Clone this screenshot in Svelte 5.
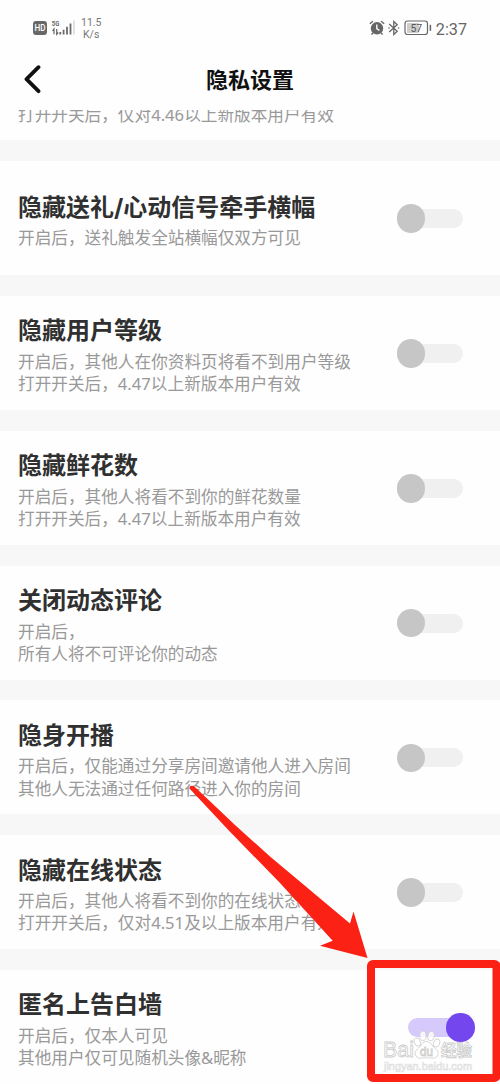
<script>
  const items = [
    { title: '隐藏送礼/心动信号牵手横幅', lines: ['开启后，送礼触发全站横幅仅双方可见'], on: false },
    { title: '隐藏用户等级', lines: ['开启后，其他人在你资料页将看不到用户等级', '打开开关后，4.47以上新版本用户有效'], on: false },
    { title: '隐藏鲜花数', lines: ['开启后，其他人将看不到你的鲜花数量', '打开开关后，4.47以上新版本用户有效'], on: false },
    { title: '关闭动态评论', lines: ['开启后，', '所有人将不可评论你的动态'], on: false },
    { title: '隐身开播', lines: ['开启后，仅能通过分享房间邀请他人进入房间', '其他人无法通过任何路径进入你的房间'], on: false },
    { title: '隐藏在线状态', lines: ['开启后，其他人将看不到你的在线状态', '打开开关后，仅对4.51及以上版本用户有效'], on: false },
    { title: '匿名上告白墙', lines: ['开启后，仅本人可见', '其他用户仅可见随机头像&昵称'], on: true }
  ];
</script>

<div class="screen">
  <div class="status">
    <div class="left">
      <svg width="44" height="18" viewBox="0 0 44 18">
        <rect x="1" y="2" width="14" height="14" rx="3" fill="#686868" />
        <text x="2.5" y="12.4" font-size="9" font-weight="500" fill="#fff" textLength="11" lengthAdjust="spacingAndGlyphs">HD</text>
        <text x="19.8" y="7.2" font-size="8" font-weight="700" fill="#666" textLength="7.5" lengthAdjust="spacingAndGlyphs">5G</text>
        <path d="M22 15.3V10l-1.5 1.8M24.7 10V15.3l1.5-1.8" fill="none" stroke="#666" stroke-width="1.2" />
        <path d="M28.3 13V15.5M31.6 10.8V15.5M35 7.8V15.5M38.5 4.5V15.5" stroke="#6a6a6a" stroke-width="1.8" />
        <path d="M42 1.5V15.5" stroke="#e1e1e1" stroke-width="2" />
      </svg>
      <div class="speed"><span>11.5</span><span>K/s</span></div>
    </div>
    <div class="right">
      <svg width="16" height="16" viewBox="0 0 16 16">
        <circle cx="8" cy="8.3" r="6.2" fill="#666" />
        <path d="M.8 3.8 4 1.2M15.2 3.8 12 1.2M4 13l-1.6 1.6M12 13l1.6 1.6" stroke="#666" stroke-width="1.4" />
        <path d="M7.8 4.6v4l2.6 1.9" fill="none" stroke="#fff" stroke-width="1.4" />
      </svg>
      <svg class="bt" width="12" height="16" viewBox="0 0 12 16">
        <path d="M1.2 4 9.2 11.2 5.8 14.5V1.5L9.2 4.7 1.2 12" fill="none" stroke="#666" stroke-width="1.3" />
        <circle cx="1" cy="8" r=".8" fill="#666" /><circle cx="10.6" cy="8" r=".8" fill="#666" />
      </svg>
      <svg class="battery" width="28" height="16" viewBox="0 0 28 16">
        <rect x="3" y="3" width="12" height="10" rx="1" fill="#cecece" />
        <rect x="1" y="1" width="22.5" height="13.5" rx="2.5" fill="none" stroke="#666" stroke-width="1.2" />
        <path d="M26.4 4.8v6" stroke="#666" stroke-width="1.5" />
        <text x="12.3" y="11.7" text-anchor="middle" font-size="10.5" fill="#555">57</text>
      </svg>
      <span class="time">2:37</span>
    </div>
  </div>

  <header>
    <svg width="20" height="30" viewBox="0 0 20 30">
      <path d="M16.5 2.2 4.5 14.2 16.5 26.2" fill="none" stroke="#111" stroke-width="3.8" stroke-linecap="round" stroke-linejoin="round" />
    </svg>
    <h1>隐私设置</h1>
  </header>

  <main>
    <section class="scrolled"><p>打开开关后，仅对4.46以上新版本用户有效</p></section>
    {#each items as item}
      <section class="card">
        <div class="copy">
          <h2>{item.title}</h2>
          {#each item.lines as line}<p>{line}</p>{/each}
        </div>
        <div class="switch" class:on={item.on}><i></i></div>
      </section>
    {/each}
  </main>

  <svg class="overlay" width="500" height="1084" viewBox="0 0 500 1084">
    <g class="mark">
      <text x="383" y="1057" font-size="22" textLength="31" lengthAdjust="spacingAndGlyphs">Bai</text>
      <ellipse cx="417.3" cy="1042" rx="3" ry="4.2" transform="rotate(-20 417.3 1042)" />
      <ellipse cx="423" cy="1035.8" rx="3.2" ry="4.7" />
      <ellipse cx="431" cy="1036" rx="3.2" ry="4.7" transform="rotate(10 431 1036)" />
      <ellipse cx="436.6" cy="1043" rx="3" ry="4.2" transform="rotate(22 436.6 1043)" />
      <path d="M426.5 1041.5c-4 0-5.2 4-8 6.5-3 2.7-4.2 5-2.5 8 2 3.3 6 1.8 10.5 1.8s8.5 1.5 10.8-1.8c2-3 .3-5.5-2.6-8-3-2.5-4.2-6.5-8.2-6.5z" />
      <text class="du" x="420" y="1056" font-size="12" textLength="13" lengthAdjust="spacingAndGlyphs">du</text>
      <text class="cn" x="441" y="1056" font-size="15.5" textLength="31">经验</text>
      <text class="url" x="384" y="1069.5" font-size="10.5" textLength="88" lengthAdjust="spacingAndGlyphs">jingyan.baidu.com</text>
    </g>
    <path d="M189.5 788.5Q189 785.5 192 785.8 194 785.8 196 788L235 825 270 856.5 350 923.5 353.5 911.5 367.5 958 320 945.7 332.7 940.7 280 883 230 831.7Z" fill="#fb2114" />
    <rect x="371" y="964" width="125.5" height="114" rx="2" fill="none" stroke="#fb2114" stroke-width="8" />
  </svg>
</div>

<style>
  :global(body) { margin: 0; background: #fff; }
  .screen {
    position: relative;
    display: flex;
    flex-direction: column;
    width: 500px;
    height: 1084px;
    overflow: hidden;
    background: #fefefe;
    font-family: Roboto, "Noto Sans CJK SC", sans-serif;
  }
  .status {
    display: flex;
    flex: none;
    justify-content: space-between;
    height: 55px;
    box-sizing: border-box;
    padding: 15px 33px 0 32px;
    color: #666;
  }
  .left, .right { display: flex; align-items: flex-start; }
  .left svg { margin-top: 4px; }
  .speed { display: flex; flex-direction: column; margin: 1.5px 0 0 5px; font-size: 10.5px; line-height: 12.6px; color: #777; }
  .speed span:last-child { padding-left: 2px; }
  .right svg { margin-top: 5px; }
  .bt { margin-left: 3px; }
  .battery { margin-left: 4px; }
  .time { margin-left: 4px; font-size: 16.2px; line-height: 29px; }
  header {
    display: grid;
    grid-template-columns: 62px 1fr 62px;
    align-items: center;
    flex: none;
    height: 55px;
    box-sizing: border-box;
    padding-bottom: 9px;
  }
  header svg { margin: 3px 0 0 22px; }
  h1 { margin: 0; font: 700 22px/30px "Noto Sans CJK SC", sans-serif; text-align: center; color: #111; }
  main { display: flex; flex: none; flex-direction: column; gap: 20.8px; height: 974px; overflow: hidden; background: #f7f7f7; }
  section { flex: none; background: #fefefe; box-sizing: border-box; padding: 0 36px 0 18px; }
  .scrolled { display: flex; align-items: flex-end; height: 30.4px; padding-bottom: 14.5px; overflow: hidden; }
  .card { display: flex; align-items: center; justify-content: space-between; height: 114px; }
  h2 { margin: 0; padding: 1px 0 .5px; font: 700 24px/39px Inter, "Noto Sans CJK SC", sans-serif; color: #303030; white-space: nowrap; }
  p { margin: 0; font: 400 16.65px/22.3px "Noto Sans", "Noto Sans CJK SC", sans-serif; color: #999; white-space: nowrap; }
  .switch { position: relative; display: flex; align-items: center; flex: none; width: 67px; height: 29px; margin-top: 1px; }
  .switch::before { content: ""; width: 57px; height: 19px; margin-left: 9px; border-radius: 10px; background: #f0f0f0; }
  .switch i { position: absolute; left: -.5px; width: 28.5px; height: 28.5px; border-radius: 50%; background: #c6c6c6; }
  .switch.on { margin-right: -11px; }
  .switch.on::before { margin-left: 0; background: #d6c9fb; }
  .switch.on i { left: 38px; background: #7446ee; }
  .overlay { position: absolute; inset: 0; pointer-events: none; }
  .mark { fill: #fff; fill-opacity: .8; stroke: #ccc; stroke-width: .8; font-family: "Liberation Sans", sans-serif; }
  .mark .cn { font-family: "Noto Sans CJK SC", sans-serif; font-weight: 700; }
  .mark .url { fill: #fff; stroke: #ddd; stroke-width: .6; }
</style>
